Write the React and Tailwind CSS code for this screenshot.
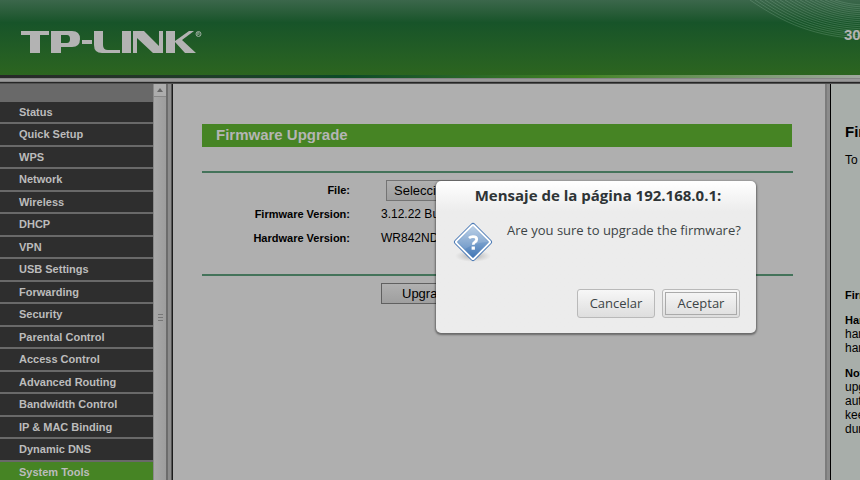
const menu = [
  "Status", "Quick Setup", "WPS", "Network", "Wireless", "DHCP", "VPN", "USB Settings",
  "Forwarding", "Security", "Parental Control", "Access Control", "Advanced Routing",
  "Bandwidth Control", "IP & MAC Binding", "Dynamic DNS", "System Tools",
];

function Logo() {
  return (
    <svg role="img" aria-label="TP-LINK" viewBox="0 0 184 26" className="h-[26px] w-[184px]">
      <g fill="#b3b3b3">
        <path d="M0 3h28v4H19v18H9V7H0z" />
        <path fillRule="evenodd" d="M30 3h21q8 0 8 8t-8 8H40v6H30zM40 7v8h6q3 0 3-4t-3-4z" />
        <path d="M61 12h10v4H61z" />
        <path d="M73 3h9v14q0 5 5 5h12v3H81q-8 0-8-8z" />
        <path d="M101 3h9v22h-9z" />
        <path d="M112 3h11l15 15V3h4v22h-10L116 10v15h-4z" />
        <path d="M145 3h9v10L168 3h5L161 12l14 13h-11l-10-11v11h-9z" />
      </g>
      <circle cx="177.500" cy="6" r="2.500" fill="none" stroke="#a8b5aa" strokeWidth=".9" />
      <path d="M176.600 7.500v-3h1.500v1.500h-1.500m1 0 1 1.500" fill="none" stroke="#a8b5aa" strokeWidth=".6" />
    </svg>
  );
}

function Waves() {
  return (
    <svg aria-hidden="true" viewBox="0 0 110 40" className="absolute right-0 top-0 h-10 w-[110px]">
      {Array.from({ length: 18 }, (_, i) => {
        const x = i * 5;
        const run = 116 - x;
        const drop = 39 - i * 2;
        return (
          <path
            key={i}
            d={`M${x} 0C${x + run * 0.3} ${drop * 0.6} ${x + run * 0.55} ${drop * 0.95} ${x + run} ${drop}`}
            fill="none"
            stroke="#a9c9b4"
            strokeOpacity=".26"
            strokeWidth=".9"
          />
        );
      })}
    </svg>
  );
}

function QuestionIcon() {
  return (
    <svg role="img" aria-label="Question" viewBox="0 0 40 42" className="h-[42px] w-10 shrink-0">
      <defs>
        <linearGradient id="blue" x1="0" y1="0" x2="1" y2="1">
          <stop offset="0" stopColor="#b4cbe4" />
          <stop offset="1" stopColor="#3f75b5" />
        </linearGradient>
        <radialGradient id="shade">
          <stop offset="0" stopColor="#888" stopOpacity=".7" />
          <stop offset="1" stopColor="#aaa" stopOpacity="0" />
        </radialGradient>
      </defs>
      <ellipse cx="20" cy="35" rx="18" ry="6" fill="url(#shade)" />
      <rect x="6.200" y="7.200" width="27.600" height="27.600" rx="2.500" transform="rotate(45 20 21)" fill="#fff" stroke="#4a79b4" />
      <rect x="8.500" y="9.500" width="23" height="23" rx="1" transform="rotate(45 20 21)" fill="url(#blue)" />
      <path d="M5 21 20 6l15 15q-12 0-23 7z" fill="#fff" fillOpacity=".13" />
      <path d="M16 17q1.500-1.300 4-1.300 3.700 0 3.700 2.600 0 1.700-1.900 2.800-1.500.9-1.500 2.600" fill="none" stroke="#fff" strokeWidth="2.800" />
      <path d="M18.600 25.500h3.300v3.200h-3.300z" fill="#fff" />
    </svg>
  );
}

function Header() {
  return (
    <header className="relative shrink-0">
      <div className="relative flex h-[75px] items-start justify-between overflow-hidden bg-linear-to-b from-[#3b674b] via-[#175429] via-30% to-[#2c651f]">
        <Waves />
        <div className="pl-[21px] pt-7"><Logo /></div>
        <div className="relative w-4 overflow-hidden pt-[26px] text-[15px] leading-[18px] font-bold text-[#b3b3b3]">300M</div>
      </div>
      <div className="flex h-[3px]">
        <div className="w-2/5 bg-linear-to-r from-[#282828] to-[#0b4a27]" />
        <div className="w-[28%] bg-linear-to-r from-[#0b4a27] to-[#438322]" />
        <div className="grow bg-linear-to-r from-[#438322] to-[#a0a79e]" />
      </div>
      <div className="h-1 border-y border-[#858585] bg-[#999]" />
      <div className="h-[2px] border-b border-[#505050] bg-[#262626]" />
    </header>
  );
}

function Sidebar() {
  return (
    <nav className="w-[153px] shrink-0 overflow-hidden bg-[#696969] pt-[18px]">
      <ul>
        {menu.map((item) => (
          <li key={item} className="odd:h-[22px] even:h-[23px]">
            <a
              href="#"
              className={`block h-full border-b-2 border-[#696969] pl-[19px] text-[11px] leading-[21px] font-bold text-[#bcbcbc] ${
                item === "System Tools" ? "bg-[#468424]" : "bg-[#2e2e2e]"
              }`}
            >
              {item}
            </a>
          </li>
        ))}
      </ul>
    </nav>
  );
}

function ScrollBar() {
  return (
    <div aria-hidden="true" className="flex w-[13px] shrink-0 flex-col border-l border-[#8a8a8a] bg-linear-to-r from-[#a8a8a8] to-[#9d9d9d]">
      <div className="flex h-[13px] items-center justify-center border-b border-[#888] bg-[#adadad]">
        <svg viewBox="0 0 6 4" className="h-1 w-1.5"><path d="M0 4 3 0l3 4z" fill="#666" /></svg>
      </div>
      <div className="flex grow flex-col items-center justify-center gap-[2px] pt-[58px]">
        <i className="h-px w-[5px] bg-[#777]" />
        <i className="h-px w-[5px] bg-[#777]" />
        <i className="h-px w-[5px] bg-[#777]" />
      </div>
    </div>
  );
}

function Main() {
  const label = "w-[148px] p-0 text-right text-[11px] font-bold";
  const value = "overflow-hidden whitespace-nowrap p-0 pl-[31px] text-[12px]";
  return (
    <main className="min-w-0 grow bg-[#afafaf] pl-[29px] pr-8 pt-10">
      <h1 className="mr-px h-[23px] bg-[#468424] pl-[14px] text-[15px] leading-[22px] font-bold text-[#b5b5b5]">Firmware Upgrade</h1>
      <div className="mt-6 border-y-2 border-[#44735a] pb-6 pt-[5px]">
        <table className="w-full border-collapse">
          <tbody>
            <tr className="h-6">
              <th scope="row" className={label}>File:</th>
              <td className={value}>
                <button type="button" className="ml-[5px] block h-[21px] border border-[#747474] bg-linear-to-b from-[#b0b0b0] to-[#9f9f9f] px-[7px] text-[13px] leading-[19px]">
                  Seleccionar
                </button>
              </td>
            </tr>
            <tr className="h-6">
              <th scope="row" className={label}>Firmware Version:</th>
              <td className={value}>3.12.22 Build</td>
            </tr>
            <tr className="h-6">
              <th scope="row" className={label}>Hardware Version:</th>
              <td className={value}>WR842ND</td>
            </tr>
          </tbody>
        </table>
      </div>
      <button type="button" className="ml-[179px] mt-[7px] block h-[21px] border border-[#606060] bg-linear-to-b from-[#b0b0b0] to-[#9f9f9f] px-5 text-[13px] leading-[19px]">
        Upgrade
      </button>
    </main>
  );
}

function Help() {
  const term = "text-[11px]";
  return (
    <aside className="w-[30px] shrink-0 overflow-hidden whitespace-nowrap border-l border-black bg-[#a8aeaa] pl-[14px] pt-[38px] text-[12px] leading-[14px]">
      <h2 className="text-[15px] leading-5 font-bold">Firmware</h2>
      <p className="mt-[11px]">To upgrade</p>
      <p className="mt-[121px]"><b className={term}>Firmware</b></p>
      <p className="mt-[11px]"><b className={term}>Hardware</b><br />hardware<br />hardware</p>
      <p className="mt-[11px]"><b className={term}>Note:</b><br />upgrading<br />automatic<br />keep<br />during</p>
    </aside>
  );
}

function Dialog() {
  const button = "h-[29px] rounded-[3px] border border-[#b9b9b9] bg-linear-to-b from-[#f7f7f7] to-[#dedede] text-[13px] text-[#3c4446]";
  return (
    <div
      role="dialog"
      aria-labelledby="dialog-title"
      className="absolute left-[436px] top-[181px] w-80 rounded-[5px] bg-[#ececec] bg-linear-to-b from-white to-[#ececec] to-20% pb-[15px] font-['Open_Sans',sans-serif] text-[#3c4446] shadow-[0_1px_2px_1px_rgba(0,0,0,0.4)]"
    >
      <h2 id="dialog-title" className="pl-1 pt-1 text-center text-[15px] leading-5 font-bold text-[#2e3436]">
        Mensaje de la página 192.168.0.1:
      </h2>
      <div className="mt-4 flex gap-[14px] pl-[17px]">
        <QuestionIcon />
        <p className="text-[13px] leading-[18px]">Are you sure to upgrade the firmware?</p>
      </div>
      <div className="mt-[26px] flex justify-end gap-[7px] pr-4">
        <button type="button" className={`${button} w-[78px]`}>Cancelar</button>
        <button type="button" className={`${button} w-[78px] p-[2px]`}>
          <span className="flex h-full items-center justify-center border border-[#aaa]">Aceptar</span>
        </button>
      </div>
    </div>
  );
}

export default function App() {
  return (
    <div className="relative flex h-screen flex-col overflow-hidden font-['Liberation_Sans',Arial,sans-serif] text-black">
      <Header />
      <div className="flex min-h-0 grow">
        <Sidebar />
        <ScrollBar />
        <div className="flex w-[7px] shrink-0 border-r border-[#1c1c1c] bg-[#8c8c8c]">
          <div className="w-[2px] bg-[#6c6c6c]" />
          <div className="ml-auto w-px bg-[#555]" />
        </div>
        <Main />
        <div className="w-[5px] shrink-0 border-l-2 border-[#7c7c7c] bg-[#8c8c8c]" />
        <Help />
      </div>
      <Dialog />
    </div>
  );
}
